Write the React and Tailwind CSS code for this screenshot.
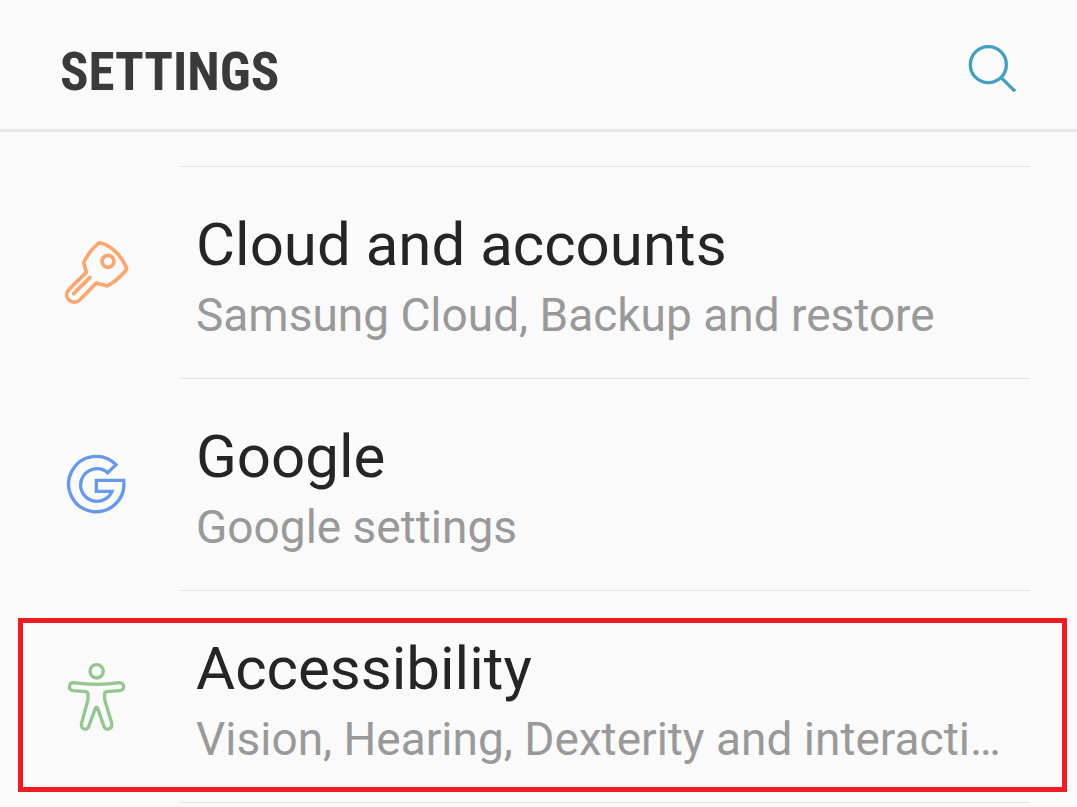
import React from "react";

function SearchIcon() {
  return (
    <svg viewBox="54 41 144 144" className="block size-12" fill="none" stroke="#459fbe" strokeWidth="10" aria-hidden="true">
      <circle cx="115" cy="103" r="54" />
      <path d="M153 141 L195 183" />
    </svg>
  );
}

function KeyIcon() {
  return (
    <svg viewBox="0 2 255 255" className="block size-[85px]" fill="none" stroke="#fba56f" strokeWidth="11" strokeLinejoin="round" strokeLinecap="round" aria-hidden="true">
      <path d="M137 38 C164 44 198 72 214 112 C215 115 214 119 211 122 C196 140 178 155 157 167 L124 158 L75 208 C65 218 50 217 42 209 C33 200 32 187 42 177 L94 126 L86 97 C96 75 110 56 129 40 Q133 37 137 38 Z" />
      <circle cx="159" cy="93" r="18" />
      <path d="M105 141 L56 190" />
    </svg>
  );
}

function GoogleIcon() {
  return (
    <svg viewBox="0 0 255 240" className="block h-20 w-[85px]" fill="none" stroke="#6799ea" strokeWidth="10" aria-hidden="true">
      <path d="M183 59 A83 83 0 1 0 206 106 L124 106 L124 139 L171 139 A49 49 0 1 1 158 83 Z" />
    </svg>
  );
}

function PersonIcon() {
  return (
    <svg viewBox="0 8 255 255" className="block size-[85px]" fill="none" stroke="#95c692" strokeWidth="10" strokeLinejoin="round" aria-hidden="true">
      <circle cx="125" cy="57" r="20" />
      <path d="M56 91 Q125 101 193 91 C210 91 210 114 195 115 L155 118 Q149 119 149 127 L149 142 L170 212 C174 230 154 236 147 223 L128 168 Q125 161 121 168 L101 223 C94 236 75 230 80 212 L99 142 L99 127 Q99 119 93 118 L54 115 C39 112 40 91 56 91 Z" />
    </svg>
  );
}

const items = [
  { title: "Cloud and accounts", detail: "Samsung Cloud, Backup and restore", Icon: KeyIcon },
  { title: "Google", detail: "Google settings", Icon: GoogleIcon },
  { title: "Accessibility", detail: "Vision, Hearing, Dexterity and interaction", Icon: PersonIcon, highlighted: true },
];

function SettingsItem({ title, detail, Icon, highlighted }) {
  return (
    <li className="relative">
      <a href="#" className="flex items-stretch pr-[47px]">
        <span className="flex w-[181px] shrink-0 items-center pl-[55px]">
          <Icon />
        </span>
        <span className="flex min-w-0 flex-1 flex-col gap-1 border-b border-[#e4e4e4] pt-[42px] pr-4 pb-[33px] pl-[15px]">
          <span className="truncate text-[60px] leading-[72px] text-[#252525]">{title}</span>
          <span className="truncate text-[46px] leading-[60px] text-[#999999]">{detail}</span>
        </span>
      </a>
      {highlighted && (
        <span className="pointer-events-none absolute top-[27px] right-[10px] bottom-[11px] left-[18px] border-5 border-[#ef1c24]" />
      )}
    </li>
  );
}

export default function App() {
  return (
    <div className="min-h-screen bg-[#fafafa] font-['Roboto',sans-serif]">
      <header className="flex items-end justify-between border-b-3 border-[#e6e6e6] pt-11 pr-[61px] pb-[37px] pl-[60px]">
        <h1 className="font-['Roboto_Condensed','Roboto',sans-serif] text-[53px] leading-10 font-bold text-[#3a3a3a]">SETTINGS</h1>
        <button type="button" aria-label="Search" className="cursor-pointer">
          <SearchIcon />
        </button>
      </header>
      <main className="pt-[34px]">
        <ul>
          <li aria-hidden="true" className="mr-[47px] ml-[181px] border-b border-[#e4e4e4]" />
          {items.map((item) => (
            <SettingsItem key={item.title} {...item} />
          ))}
        </ul>
      </main>
    </div>
  );
}
